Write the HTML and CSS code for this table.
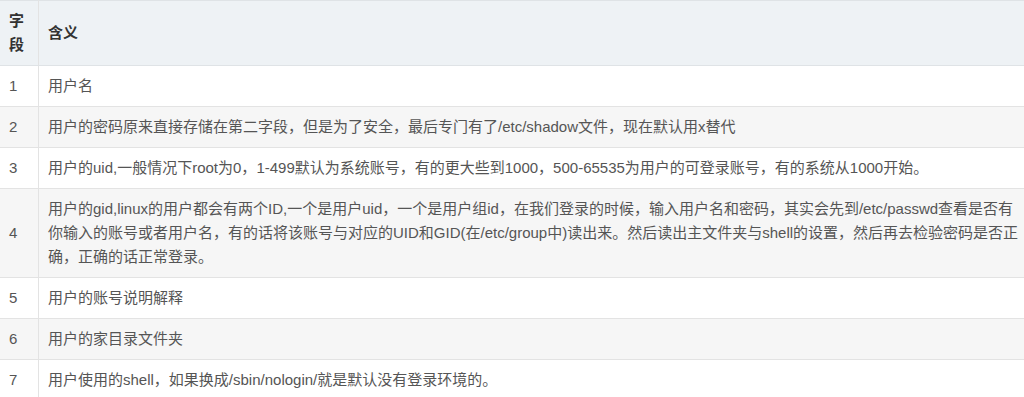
FILE: index.html
```html
<!DOCTYPE html>
<html lang="zh">
<head>
<meta charset="utf-8">
<title>passwd 字段</title>
<link rel="stylesheet" href="styles.css">
</head>
<body>
<table class="fields">
  <thead>
    <tr><th class="num">字段</th><th>含义</th></tr>
  </thead>
  <tbody>
    <tr><td class="num">1</td><td>用户名</td></tr>
    <tr><td class="num">2</td><td>用户的密码原来直接存储在第二字段，但是为了安全，最后专门有了/etc/shadow文件，现在默认用x替代</td></tr>
    <tr><td class="num">3</td><td>用户的uid,一般情况下root为0，1-499默认为系统账号，有的更大些到1000，500-65535为用户的可登录账号，有的系统从1000开始。</td></tr>
    <tr><td class="num">4</td><td>用户的gid,linux的用户都会有两个ID,一个是用户uid，一个是用户组id，在我们登录的时候，输入用户名和密码，其实会先到/etc/passwd查看是否有你输入的账号或者用户名，有的话将该账号与对应的UID和GID(在/etc/group中)读出来。然后读出主文件夹与shell的设置，然后再去检验密码是否正确，正确的话正常登录。</td></tr>
    <tr><td class="num">5</td><td>用户的账号说明解释</td></tr>
    <tr><td class="num">6</td><td>用户的家目录文件夹</td></tr>
    <tr><td class="num">7</td><td>用户使用的shell，如果换成/sbin/nologin/就是默认没有登录环境的。</td></tr>
  </tbody>
</table>
</body>
</html>
```

FILE: styles.css
```css
html, body {
  margin: 0;
  padding: 0;
  background: #ffffff;
}

.fields {
  width: 100%;
  border-collapse: collapse;
  font-family: "Liberation Sans", "Noto Sans CJK SC", sans-serif;
  font-size: 15px;
  line-height: 24px;
  color: #555555;
  table-layout: fixed;
}

.fields th,
.fields td {
  padding: 8px 4px 8px 9px;
  text-align: left;
  vertical-align: middle;
  border-top: 1px solid #e3e3e3;
  border-bottom: 1px solid #e3e3e3;
}

.fields th.num,
.fields td.num {
  width: 26px;
  padding-right: 3px;
  border-right: 1px solid #e3e3e3;
}

.fields thead th {
  background: #eef2f5;
  color: #333333;
  font-weight: bold;
  border-top-color: #dfe3e6;
  border-bottom-color: #dfe3e6;
}

.fields tbody tr:nth-child(even) td {
  background: #f6f6f6;
}

.fields td:last-child {
  word-break: break-all;
}
```
